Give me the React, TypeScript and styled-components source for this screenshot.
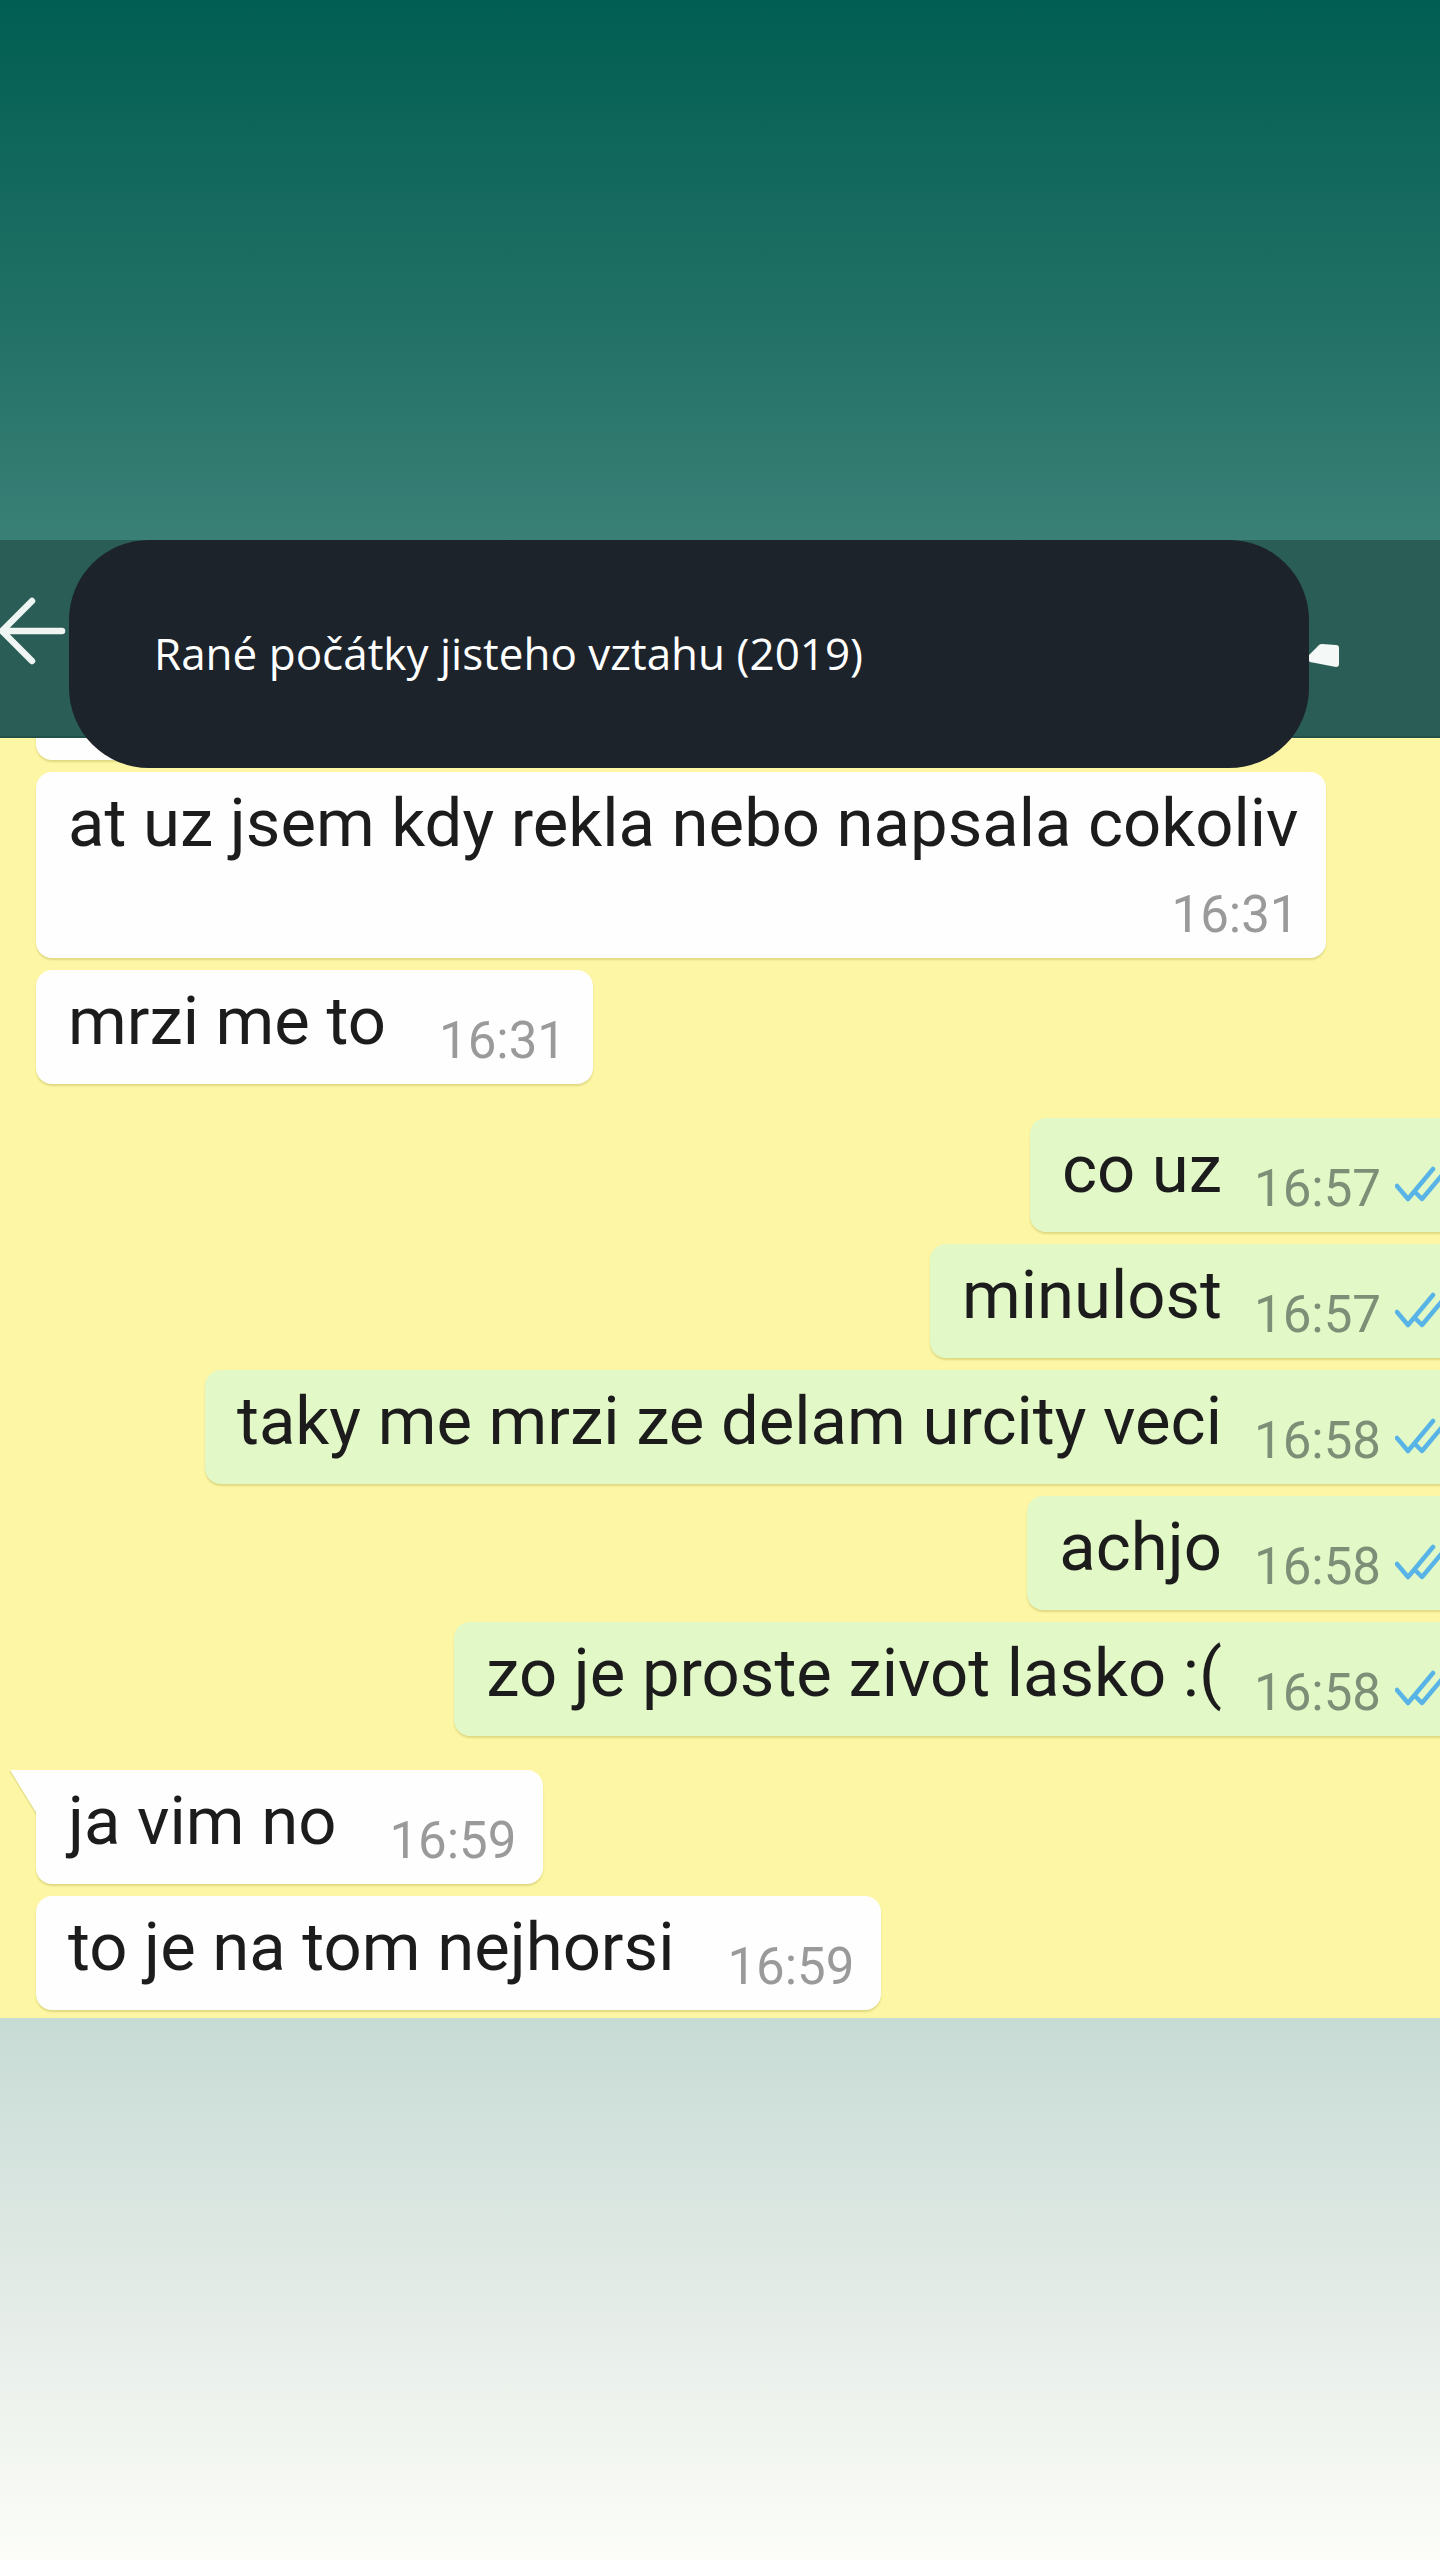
import React from "react";
import styled, { createGlobalStyle } from "styled-components";

interface Message {
  text: string;
  time: string;
  out?: boolean;
  tail?: boolean;
  stacked?: boolean;
  groupStart?: boolean;
}

const messages: Message[] = [
  { text: "at uz jsem kdy rekla nebo napsala cokoliv", time: "16:31", stacked: true },
  { text: "mrzi me to", time: "16:31" },
  { text: "co uz", time: "16:57", out: true, groupStart: true },
  { text: "minulost", time: "16:57", out: true },
  { text: "taky me mrzi ze delam urcity veci", time: "16:58", out: true },
  { text: "achjo", time: "16:58", out: true },
  { text: "zo je proste zivot lasko :(", time: "16:58", out: true },
  { text: "ja vim no", time: "16:59", tail: true, groupStart: true },
  { text: "to je na tom nejhorsi", time: "16:59" },
];

const GlobalStyle = createGlobalStyle`
  html, body {
    margin: 0;
    padding: 0;
    background: #ffffff;
  }
  body {
    font-family: Roboto, "Liberation Sans", sans-serif;
  }
`;

const App = () => {
  return (
    <>
      <GlobalStyle />
      <Page>
        <TopGlow />
        <Shot>
          <ChatHeader>
            <BackArrow width="72" height="72" viewBox="0 0 72 72">
              <path
                d="M6 36 L66 36 M36 6 L6 36 L36 66"
                fill="none"
                stroke="#eef5f3"
                strokeWidth="6.5"
                strokeLinecap="round"
                strokeLinejoin="round"
              />
            </BackArrow>
            <CallIcon width="32" height="26" viewBox="0 0 32 26">
              <path
                d="M1 13 L11 3 Q12 2 14 2 L28 3 Q31 3 31 6 L31 22 Q31 25 28 25 L2 20 Q0 19 1 13 Z"
                fill="#f4f8f7"
              />
            </CallIcon>
          </ChatHeader>

          <Chat>
            <HiddenBubble />
            {messages.map((m, i) => (
              <Row key={i} $out={!!m.out} $groupStart={!!m.groupStart}>
                <Bubble $out={!!m.out} $tail={!!m.tail} $stacked={!!m.stacked}>
                  <MsgText>{m.text}</MsgText>
                  <Time $out={!!m.out} $stacked={!!m.stacked}>
                    {m.time}
                  </Time>
                  {m.out && (
                    <Ticks width="62" height="40" viewBox="0 0 62 40">
                      <path
                        d="M2 21 L13 34 L38 4 M21 28 L27 34 L52 4"
                        fill="none"
                        stroke="#58b4e6"
                        strokeWidth="4.5"
                        strokeLinecap="round"
                        strokeLinejoin="round"
                      />
                    </Ticks>
                  )}
                </Bubble>
              </Row>
            ))}
          </Chat>

          <Caption>
            <CaptionText>Rané počátky jisteho vztahu (2019)</CaptionText>
          </Caption>
        </Shot>
        <BottomGlow />
      </Page>
    </>
  );
};

const Page = styled.div`
  width: 1440px;
  display: flex;
  flex-direction: column;
  overflow: hidden;
`;

const TopGlow = styled.div`
  height: 540px;
  background: linear-gradient(180deg, #015e52 0%, #1f6f64 55%, #3a8077 100%);
`;

const BottomGlow = styled.div`
  height: 542px;
  background: linear-gradient(180deg, #c7dbd5 0%, #e3ebe6 50%, #fcfdf8 100%);
`;

const Shot = styled.div`
  position: relative;
  display: flex;
  flex-direction: column;
`;

const ChatHeader = styled.div`
  height: 198px;
  box-sizing: border-box;
  background: #2a5d55;
  border-bottom: 2px solid #22514a;
  display: flex;
  justify-content: space-between;
  align-items: flex-start;
  padding-right: 100px;
`;

const BackArrow = styled.svg`
  margin-top: 55px;
  margin-left: -4px;
`;

const CallIcon = styled.svg`
  margin-top: 102px;
`;

const Chat = styled.div`
  height: 1280px;
  box-sizing: border-box;
  background: #fdf7a5;
  overflow: hidden;
  display: flex;
  flex-direction: column;
  gap: 12px;
`;

const HiddenBubble = styled.div`
  width: 900px;
  height: 114px;
  margin-top: -92px;
  margin-left: 36px;
  flex-shrink: 0;
  background: #fefefe;
  border-radius: 16px;
  box-shadow: 0 2px 2px rgba(140, 128, 30, 0.25);
`;

const Row = styled.div<{ $out: boolean; $groupStart: boolean }>`
  display: flex;
  justify-content: ${(p) => (p.$out ? "flex-end" : "flex-start")};
  padding-left: ${(p) => (p.$out ? "0" : "36px")};
  margin-top: ${(p) => (p.$groupStart ? "22px" : "0")};
`;

const Bubble = styled.div<{ $out: boolean; $tail: boolean; $stacked: boolean }>`
  position: relative;
  flex-shrink: 0;
  display: flex;
  flex-direction: ${(p) => (p.$stacked ? "column" : "row")};
  align-items: flex-end;
  box-sizing: border-box;
  padding: 13px ${(p) => (p.$out ? "23px" : "27px")} 24px 32px;
  margin-right: ${(p) => (p.$out ? "-40px" : "0")};
  background: ${(p) => (p.$out ? "#e3f8c7" : "#fefefe")};
  border-radius: ${(p) => (p.$tail ? "0 16px 16px 16px" : "16px")};
  box-shadow: 0 2px 2px rgba(140, 128, 30, 0.25);

  ${(p) =>
    p.$tail &&
    `
    &::before {
      content: "";
      position: absolute;
      left: -26px;
      top: 0;
      width: 0;
      height: 0;
      border-top: 44px solid #fefefe;
      border-left: 27px solid transparent;
      filter: drop-shadow(-1px 1px 0 rgba(140, 128, 30, 0.2));
    }
  `}
`;

const MsgText = styled.span`
  align-self: flex-start;
  font-family: Roboto, "Liberation Sans", sans-serif;
  font-size: 67px;
  line-height: 77px;
  color: #1c1c1c;
  white-space: nowrap;
`;

const Time = styled.span<{ $out: boolean; $stacked: boolean }>`
  font-family: Roboto, "Liberation Sans", sans-serif;
  font-size: 51px;
  line-height: 60px;
  white-space: nowrap;
  color: ${(p) => (p.$out ? "#7d8f77" : "#9a9a9a")};
  margin-left: ${(p) => (p.$stacked ? "0" : p.$out ? "32px" : "53px")};
  margin-top: ${(p) => (p.$stacked ? "23px" : "0")};
  margin-bottom: -11px;
`;

const Ticks = styled.svg`
  flex-shrink: 0;
  margin-left: 14px;
  margin-bottom: 3px;
`;

const Caption = styled.div`
  position: absolute;
  top: 0;
  left: 69px;
  width: 1240px;
  height: 228px;
  box-sizing: border-box;
  padding-left: 85px;
  display: flex;
  align-items: center;
  background: #1c232b;
  border-radius: 80px;
  z-index: 2;
`;

const CaptionText = styled.div`
  font-family: "Open Sans", "Noto Sans", sans-serif;
  font-size: 44px;
  color: #ffffff;
  white-space: nowrap;
  margin-top: -2px;
`;

export default App;
